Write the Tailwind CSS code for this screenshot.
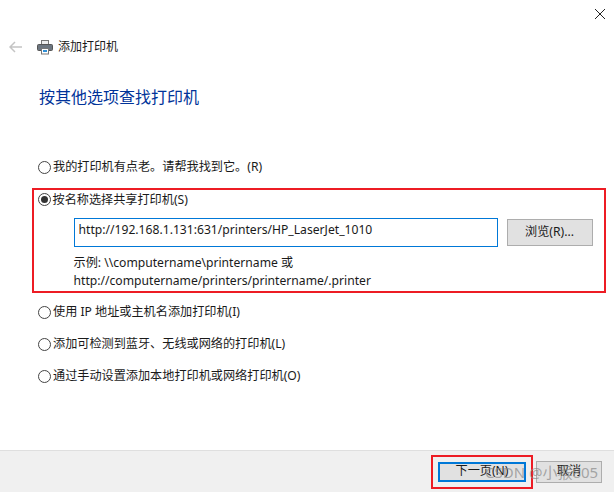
<!DOCTYPE html>
<html lang="zh">
<head>
  <meta charset="UTF-8">
  <title>添加打印机</title>
  <script src="https://cdn.jsdelivr.net/npm/@tailwindcss/browser@4"></script>
</head>
<body class="w-[614px] h-[492px] overflow-hidden bg-white text-[12.15px] text-[#1a1a1a] font-['Noto_Sans','Noto_Sans_CJK_SC',sans-serif]">
  <div class="relative flex flex-col h-full">
    <!-- title bar -->
    <div class="flex justify-end h-[30px] pr-[9px] pt-[9px]">
      <svg class="w-[10px] h-[10px]" viewBox="0 0 10 10" fill="none" stroke="#222" stroke-width="1"><path d="M0 0l10 10M10 0L0 10"/></svg>
    </div>
    <div class="flex items-center h-[34px] pl-[9px] gap-[15px]">
      <svg class="w-[13px] h-[12px]" viewBox="0 0 13 12" fill="none" stroke="#c4c4c4" stroke-width="1.5"><path d="M13 6H1M6 1L1 6l5 5"/></svg>
      <div class="flex items-center gap-[5px]">
        <svg class="w-[16px] h-[16px]" viewBox="0 0 16 16"><rect x="4.5" y="1.5" width="7" height="4" fill="#eee" stroke="#777"/><rect x="0.5" y="5.5" width="15" height="6" rx="1" fill="#6d7680" stroke="#555"/><rect x="4.5" y="9.5" width="7" height="5.5" fill="#fff" stroke="#777"/><rect x="6" y="11" width="4" height="2" fill="#2f8fd6"/></svg>
        <span class="leading-[16px] text-[12px]">添加打印机</span>
      </div>
    </div>
    <h1 class="pl-[39px] mt-[23px] text-[16px] leading-[20px] text-[#003399]">按其他选项查找打印机</h1>

    <!-- options -->
    <div class="flex flex-col mt-[50px]">
      <label class="flex items-center gap-[2px] h-[20px] pl-[38px]"><span class="w-[13px] h-[13px] rounded-full border border-[#444] bg-white"></span><span class="leading-[16px]">我的打印机有点老。请帮我找到它。(R)</span></label>
      <div class="mt-[11px] ml-[32px] w-[574px] h-[105px] border-[2.5px] border-[#ed1c24] pl-[3.5px]">
        <label class="flex items-center gap-[2px] h-[20px] mt-[-0.5px]"><span class="flex items-center justify-center w-[13px] h-[13px] rounded-full border border-[#444] bg-white"><span class="w-[7px] h-[7px] rounded-full bg-[#333]"></span></span><span class="leading-[16px]">按名称选择共享打印机(S)</span></label>
        <div class="flex items-center mt-[8px] ml-[36px] gap-[9px]">
          <input type="text" value="http://192.168.1.131:631/printers/HP_LaserJet_1010" class="w-[424px] h-[29px] border border-[#0078d7] px-[4px] pb-[5px] outline-none">
          <button class="w-[86px] h-[27px] bg-[#e1e1e1] border border-[#adadad]">浏览(R)...</button>
        </div>
        <p class="ml-[36px] mt-[7px] leading-[18px]">示例: \\computername\printername 或<br>http://computername/printers/printername/.printer</p>
      </div>
      <label class="flex items-center gap-[2px] h-[20px] pl-[38px] mt-[9px]"><span class="w-[13px] h-[13px] rounded-full border border-[#444] bg-white"></span><span class="leading-[16px]">使用 IP 地址或主机名添加打印机(I)</span></label>
      <label class="flex items-center gap-[2px] h-[20px] pl-[38px] mt-[12px]"><span class="w-[13px] h-[13px] rounded-full border border-[#444] bg-white"></span><span class="leading-[16px]">添加可检测到蓝牙、无线或网络的打印机(L)</span></label>
      <label class="flex items-center gap-[2px] h-[20px] pl-[38px] mt-[12px]"><span class="w-[13px] h-[13px] rounded-full border border-[#444] bg-white"></span><span class="leading-[16px]">通过手动设置添加本地打印机或网络打印机(O)</span></label>
    </div>

    <!-- footer -->
    <div class="mt-auto h-[42px] bg-[#f0f0f0] border-t border-[#dfdfdf] flex items-center justify-end pr-[12px]">
      <div class="flex items-center justify-center w-[102px] h-[34px] border-[2.5px] border-[#ed1c24] mr-[3px]">
        <button class="w-[88px] h-[20px] bg-[#e1e1e1] border-2 border-[#0078d7] leading-none">下一页(N)</button>
      </div>
      <button class="w-[66px] h-[22px] bg-[#e1e1e1] border border-[#adadad]">取消</button>
    </div>

    <!-- watermark -->
    <span class="absolute left-[485px] top-[463px] text-[15px] leading-[18px] text-[#888]/70 whitespace-nowrap">CSDN @小猴805</span>
  </div>
</body>
</html>
